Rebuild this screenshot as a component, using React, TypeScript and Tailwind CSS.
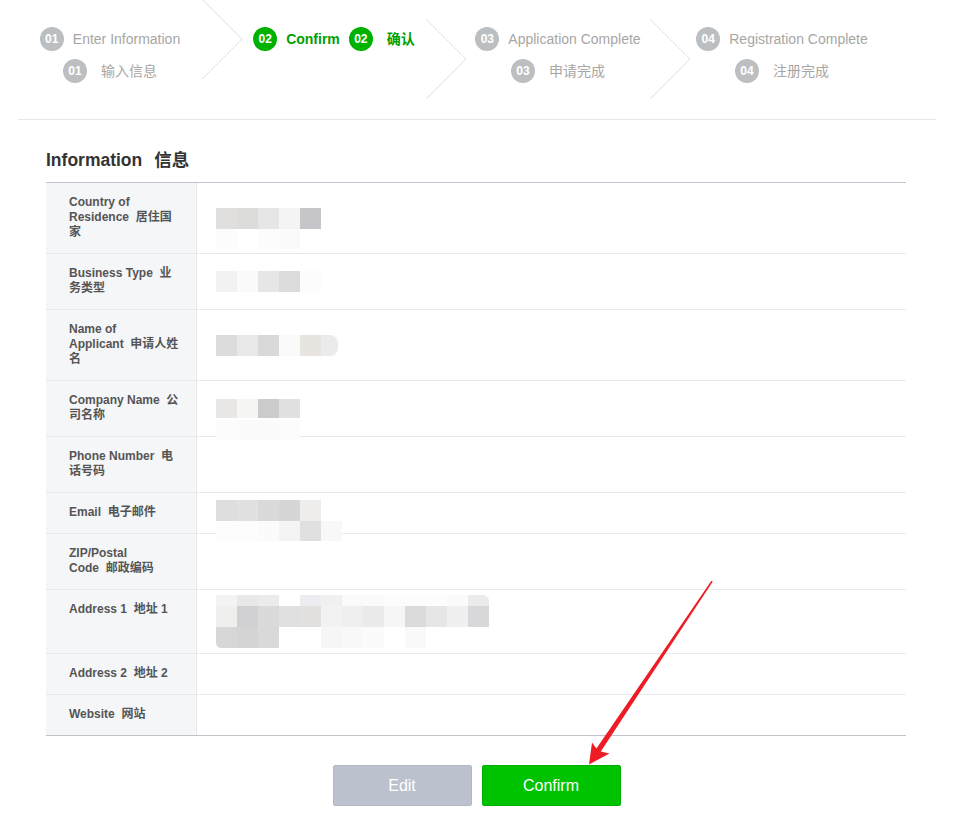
import React from 'react'

const font = "font-['Liberation_Sans','Noto_Sans_CJK_SC',sans-serif]"

type Step = {
    no: string
    en: string
    zh: string
    active?: boolean
    chevron?: 'top' | 'mid'
}

const steps: Step[] = [
    { no: '01', en: 'Enter Information', zh: '输入信息', chevron: 'top' },
    { no: '02', en: 'Confirm', zh: '确认', active: true, chevron: 'mid' },
    { no: '03', en: 'Application Complete', zh: '申请完成', chevron: 'mid' },
    { no: '04', en: 'Registration Complete', zh: '注册完成' },
]

function Badge({ no, active }: { no: string; active?: boolean }) {
    return (
        <span
            className={`flex h-[24px] w-[24px] shrink-0 items-center justify-center rounded-full text-[12px] font-bold text-white ${
                active ? 'bg-[#00b200]' : 'bg-[#bcbfc1]'
            }`}
        >
            {no}
        </span>
    )
}

function StepItem({ step }: { step: Step }) {
    const text = step.active
        ? 'text-[#00a000] font-bold'
        : 'text-[#a8a6a4]'
    return (
        <div className="flex shrink-0">
            <div className="flex w-[184px] flex-wrap content-start justify-center gap-x-[9px] pt-[23px]">
                <div className="flex h-[32px] items-center gap-[9px]">
                    <Badge no={step.no} active={step.active} />
                    <span className={`text-[14px] whitespace-nowrap ${text}`}>
                        {step.en}
                    </span>
                </div>
                <div className="flex h-[32px] items-center gap-[14px]">
                    <Badge no={step.no} active={step.active} />
                    <span className={`text-[14px] whitespace-nowrap ${text}`}>
                        {step.zh}
                    </span>
                </div>
            </div>
            {step.chevron && (
                <svg
                    width="40"
                    height="81"
                    viewBox="0 0 40 81"
                    className={
                        step.chevron === 'top' ? '-mt-[1px]' : 'mt-[19px]'
                    }
                >
                    <polyline
                        points="0,0 40,40 0,80"
                        fill="none"
                        stroke="#e2e2e2"
                        strokeWidth="1"
                    />
                </svg>
            )}
        </div>
    )
}

// pixelated (blurred) values from the screenshot
function Mosaic({
    rows,
    extra,
}: {
    rows: { h: string; cells: string[] }[]
    extra?: string[]
}) {
    return (
        <div className="relative flex flex-col">
            {rows.map((row, i) => (
                <div key={i} className="flex">
                    {row.cells.map((c, j) => (
                        <div key={j} className={`w-[21px] ${row.h} ${c}`} />
                    ))}
                </div>
            ))}
            {extra && (
                <div className="absolute left-0 top-[21px] flex">
                    {extra.map((c, j) => (
                        <div key={j} className={`h-[20px] w-[21px] ${c}`} />
                    ))}
                </div>
            )}
        </div>
    )
}

type Row = {
    label: React.ReactNode
    value?: React.ReactNode
    valueClass?: string
}

const rows: Row[] = [
    {
        label: (
            <>
                Country of
                <br />
                Residence&nbsp;&nbsp;居住国
                <br />家
            </>
        ),
        value: (
            <Mosaic
                rows={[
                    {
                        h: 'h-[21px]',
                        cells: [
                            'bg-[#e0dfdd]',
                            'bg-[#dcdcdb]',
                            'bg-[#e6e6e6]',
                            'bg-[#f3f4f3]',
                            'bg-[#c6c6ca]',
                        ],
                    },
                ]}
                extra={['bg-[#fcfcfc]', 'bg-white', 'bg-[#fcfcfc]', 'bg-[#fafafa]']}
            />
        ),
    },
    {
        label: (
            <>
                Business Type&nbsp;&nbsp;业
                <br />
                务类型
            </>
        ),
        value: (
            <Mosaic
                rows={[
                    {
                        h: 'h-[21px]',
                        cells: [
                            'bg-[#f2f2f2]',
                            'bg-[#fafafa]',
                            'bg-[#e6e6e6]',
                            'bg-[#dcdcdd]',
                            'bg-[#fcfcfc]',
                        ],
                    },
                ]}
            />
        ),
    },
    {
        label: (
            <>
                Name of
                <br />
                Applicant&nbsp;&nbsp;申请人姓
                <br />名
            </>
        ),
        value: (
            <div className="flex">
                <Mosaic
                    rows={[
                        {
                            h: 'h-[21px]',
                            cells: [
                                'bg-[#dcdcdc]',
                                'bg-[#e8e8e8]',
                                'bg-[#d9d9d9]',
                                'bg-[#fafafa]',
                                'bg-[#e8e4e0]',
                            ],
                        },
                    ]}
                />
                <div className="h-[21px] w-[17px] rounded-r-[8px] bg-[#ebebeb]" />
            </div>
        ),
    },
    {
        label: (
            <>
                Company Name&nbsp;&nbsp;公
                <br />
                司名称
            </>
        ),
        value: (
            <Mosaic
                rows={[
                    {
                        h: 'h-[19px]',
                        cells: [
                            'bg-[#e8e7e6]',
                            'bg-[#f5f5f4]',
                            'bg-[#cbcbcb]',
                            'bg-[#e0e1e0]',
                        ],
                    },
                ]}
                extra={['bg-[#fcfcfc]', 'bg-[#fbfbfb]', 'bg-[#fbfbfb]', 'bg-[#fcfcfc]']}
            />
        ),
    },
    {
        label: (
            <>
                Phone Number&nbsp;&nbsp;电
                <br />
                话号码
            </>
        ),
    },
    {
        label: <>Email&nbsp;&nbsp;电子邮件</>,
        value: (
            <div className="-mt-[5px]">
                <Mosaic
                    rows={[
                        {
                            h: 'h-[21px]',
                            cells: [
                                'bg-[#dedede]',
                                'bg-[#e2e1e1]',
                                'bg-[#dadadb]',
                                'bg-[#d6d6d8]',
                                'bg-[#eeedeb]',
                            ],
                        },
                    ]}
                    extra={[
                        'bg-[#fdfdfd]',
                        'bg-[#fdfdfd]',
                        'bg-[#fbfbfb]',
                        'bg-[#f4f4f4]',
                        'bg-[#e0e0e0]',
                        'bg-[#f8f8f8]',
                    ]}
                />
            </div>
        ),
    },
    {
        label: (
            <>
                ZIP/Postal
                <br />
                Code&nbsp;&nbsp;邮政编码
            </>
        ),
    },
    {
        label: <>Address 1&nbsp;&nbsp;地址 1</>,
        valueClass: 'py-[5px]',
        value: (
            <Mosaic
                rows={[
                    {
                        h: 'h-[11px]',
                        cells: [
                            'bg-[#f3f3f3]',
                            'bg-[#e8e8e8]',
                            'bg-[#ebebeb]',
                            'bg-white',
                            'bg-[#ecedf0]',
                            'bg-[#f0f0f0]',
                            'bg-[#fafafa]',
                            'bg-[#fbfbfb]',
                            'bg-[#fcfcfc]',
                            'bg-[#fcfcfc]',
                            'bg-[#fdfdfd]',
                            'bg-[#fafafa]',
                            'bg-[#ebebeb] rounded-tr-[6px]',
                        ],
                    },
                    {
                        h: 'h-[21px]',
                        cells: [
                            'bg-[#efefee]',
                            'bg-[#d1d1d3]',
                            'bg-[#dadada]',
                            'bg-[#e0e0e0]',
                            'bg-[#e2e1df]',
                            'bg-[#f2f2f2]',
                            'bg-[#efefef]',
                            'bg-[#eaeaea]',
                            'bg-[#f6f6f6]',
                            'bg-[#dbdbdb]',
                            'bg-[#e6e6e6]',
                            'bg-[#f0f0f0]',
                            'bg-[#d8d8da]',
                        ],
                    },
                    {
                        h: 'h-[21px]',
                        cells: [
                            'bg-[#d7d7d7] rounded-bl-[5px]',
                            'bg-[#d4d4d4]',
                            'bg-[#d9d9d9]',
                            'bg-white',
                            'bg-white',
                            'bg-[#f6f6f6]',
                            'bg-[#f8f8f8]',
                            'bg-[#fbfbfb]',
                            'bg-white',
                            'bg-[#f9f9f9]',
                        ],
                    },
                ]}
            />
        ),
    },
    { label: <>Address 2&nbsp;&nbsp;地址 2</> },
    { label: <>Website&nbsp;&nbsp;网站</> },
]

export default function App() {
    return (
        <div className={`relative h-[829px] w-[954px] bg-white ${font}`}>
            {/* step indicator */}
            <div className="mx-[18px] flex h-[120px] overflow-hidden border-b border-[#e6e6e6]">
                {steps.map((s) => (
                    <StepItem key={s.no} step={s} />
                ))}
            </div>

            {/* info table */}
            <div className="ml-[46px] w-[860px]">
                <h2 className="mt-[28px] mb-[10px] flex h-[24px] items-center text-[17.5px] font-bold text-[#333]">
                    Information
                    <span className="ml-[12px]">信息</span>
                </h2>
                <div className="border-t border-b border-t-[#c4c4d2] border-b-[#c2c2ca]">
                    {rows.map((r, i) => (
                        <div
                            key={i}
                            className={`flex ${
                                i < rows.length - 1
                                    ? 'border-b border-[#e9e9e9]'
                                    : ''
                            }`}
                        >
                            <div className="w-[151px] shrink-0 border-r border-[#e8e8ea] bg-[#f5f6f8] pt-[12px] pb-[13px] pl-[23px] pr-[8px] text-[12px] leading-[15px] font-bold text-[#555]">
                                {r.label}
                            </div>
                            <div
                                className={`flex flex-1 items-center pl-[19px] ${
                                    r.valueClass ?? ''
                                }`}
                            >
                                {r.value}
                            </div>
                        </div>
                    ))}
                </div>
            </div>

            {/* buttons */}
            <div className="mt-[29px] flex justify-center gap-[10px] pr-[1px]">
                <button className="h-[41px] w-[139px] rounded-[2px] border border-[#b3b9c4] bg-[#bcc2cd] text-[16px] text-white">
                    Edit
                </button>
                <button className="h-[41px] w-[139px] rounded-[2px] border border-[#00b000] bg-[#00c300] text-[16px] text-white">
                    Confirm
                </button>
            </div>

            {/* annotation arrow */}
            <svg
                className="pointer-events-none absolute left-0 top-0"
                width="954"
                height="829"
                viewBox="0 0 954 829"
            >
                <polygon
                    points="711.4,580.8 712.8,581.6 600.8,751.4 609.5,753.5 589,764.5 592,742.5 596.4,748.6"
                    fill="#ee1d25"
                />
            </svg>
        </div>
    )
}
